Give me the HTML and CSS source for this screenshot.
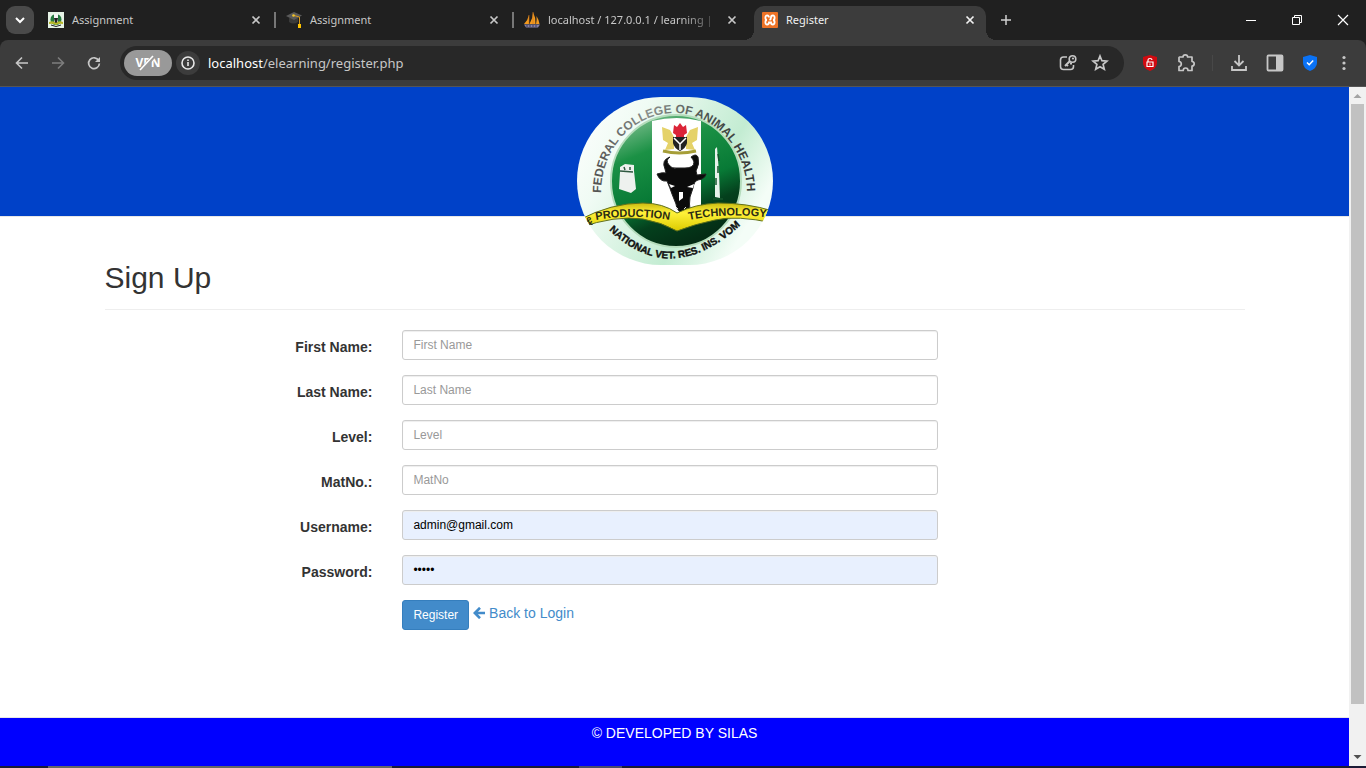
FILE: index.html
```html
<!DOCTYPE html>
<html lang="en">
<head>
<meta charset="utf-8">
<title>Register</title>
<link rel="stylesheet" href="styles.css">
</head>
<body>
<div class="window">
  <div class="tabstrip">
    <button class="tab-search" aria-label="Search tabs"><svg width="28" height="28" viewBox="0 0 28 28"><path d="M10 12l4 4 4-4" fill="none" stroke="#fff" stroke-width="2"/></svg></button>
    <div class="tab">
      <svg class="favicon" viewBox="0 0 16 16"><rect width="16" height="16" fill="#e6f3e6"/><circle cx="8" cy="7.500" r="5.500" fill="#247a3f"/><path d="M6 2h4v8H6z" fill="#f4f4f4"/><path d="M6 6l4 0-1 5H7z" fill="#222"/><path d="M1 10q4-2 7 1 3-3 7-1v2q-4-1-7 1-3-2-7-1z" fill="#b8b82a"/><path d="M3 13q5 3 10 0" stroke="#222" fill="none"/></svg>
      <span class="tab-title">Assignment</span>
      <button class="tab-close" aria-label="Close tab"><svg width="16" height="16" viewBox="0 0 16 16"><path d="M4.500 4.500l7 7m0-7l-7 7" stroke="currentColor" stroke-width="1.700"/></svg></button>
    </div>
    <i class="sep"></i>
    <div class="tab">
      <svg class="favicon" viewBox="0 0 16 16"><path d="M3 6v4q4 3 9 0V5z" fill="#3a3a3a"/><path d="M0 4l8-4 8 3.500L8 8z" fill="#5a5a5a"/><path d="M8 3.500l5.500 1.500v8" stroke="#d99a1c" fill="none"/><circle cx="7.500" cy="3.500" r="1.300" fill="#f3c62b"/><path d="M12 12h3v4h-3z" fill="#ffc400"/></svg>
      <span class="tab-title">Assignment</span>
      <button class="tab-close" aria-label="Close tab"><svg width="16" height="16" viewBox="0 0 16 16"><path d="M4.500 4.500l7 7m0-7l-7 7" stroke="currentColor" stroke-width="1.700"/></svg></button>
    </div>
    <i class="sep"></i>
    <div class="tab">
      <svg class="favicon" viewBox="0 0 16 16"><path d="M0 12Q4 8 5 3v9zM5.500 12Q9 6 9 0q3 6 2.500 12zM12 12q1-4 .500-8 2.500 4 3 8z" fill="#f39a1f"/><path d="M5 3v9M9 0v12" stroke="#c9731c" stroke-width=".6"/><path d="M0 12.500h16l-2 3H2z" fill="#8380a5"/><path d="M2 14h12" stroke="#3c3b55" stroke-dasharray="2 1"/></svg>
      <span class="tab-title fade">localhost / 127.0.0.1 / learning |</span>
      <button class="tab-close" aria-label="Close tab"><svg width="16" height="16" viewBox="0 0 16 16"><path d="M4.500 4.500l7 7m0-7l-7 7" stroke="currentColor" stroke-width="1.700"/></svg></button>
    </div>
    <i class="sep hidden"></i>
    <div class="tab active">
      <svg class="favicon" viewBox="0 0 16 16"><rect width="16" height="16" rx="1" fill="#ee7326"/><path d="M7 5.500Q7 3.500 5.200 3.500T3.400 5.700 5 8Q3.400 8 3.400 10.300T5.200 12.500 7 10.500L9 10.500Q9 12.500 10.800 12.500T12.600 10.300 11 8Q12.600 8 12.600 5.700T10.800 3.500 9 5.500 7.500 8" fill="none" stroke="#fff" stroke-width="1.800"/></svg>
      <span class="tab-title">Register</span>
      <button class="tab-close" aria-label="Close tab"><svg width="16" height="16" viewBox="0 0 16 16"><path d="M4.500 4.500l7 7m0-7l-7 7" stroke="currentColor" stroke-width="1.700"/></svg></button>
    </div>
    <button class="new-tab" aria-label="New tab"><svg width="16" height="16" viewBox="0 0 16 16"><path d="M8 3v10M3 8h10" stroke="#d0d0d0" stroke-width="1.500"/></svg></button>
    <div class="win-controls">
      <button aria-label="Minimize"><svg width="12" height="12" viewBox="0 0 12 12"><path d="M1 6.500h10" stroke="#fff"/></svg></button>
      <button aria-label="Restore"><svg width="12" height="12" viewBox="0 0 12 12"><path d="M1.500 3.500h7v7h-7zM3.500 3.500v-2h7v7h-2" fill="none" stroke="#fff"/></svg></button>
      <button aria-label="Close"><svg width="12" height="12" viewBox="0 0 12 12"><path d="M1 1l10 10M11 1L1 11" stroke="#fff" stroke-width="1.200"/></svg></button>
    </div>
  </div>
  <div class="toolbar">
    <button class="nav" aria-label="Back"><svg width="16" height="16" viewBox="0 0 16 16"><path d="M14 8H3M8 2.500L2.500 8 8 13.500" fill="none" stroke="#c7c7c7" stroke-width="1.600"/></svg></button>
    <button class="nav" aria-label="Forward"><svg width="16" height="16" viewBox="0 0 16 16"><path d="M2 8h11M8 2.500L13.500 8 8 13.500" fill="none" stroke="#7d7d7d" stroke-width="1.600"/></svg></button>
    <button class="nav" aria-label="Reload"><svg width="16" height="16" viewBox="0 0 16 16"><path d="M12.700 5.500A5.400 5.400 0 1 0 13.400 8.500" fill="none" stroke="#c7c7c7" stroke-width="1.700"/><path d="M14 2v5H9z" fill="#c7c7c7"/></svg></button>
    <div class="omnibox">
      <button class="vpn" aria-label="VPN off"><span>VPN</span><svg viewBox="0 0 48 26"><path d="M17 21L30 6" stroke="#999" stroke-width="4"/><path d="M16 20L29 6" stroke="#fff" stroke-width="1.600"/></svg></button>
      <button class="info" aria-label="Site information"><svg width="16" height="16" viewBox="0 0 16 16"><circle cx="8" cy="8" r="6" fill="none" stroke="#e8e8e8" stroke-width="1.600"/><path d="M8 7v4M8 4.500v1.500" stroke="#e8e8e8" stroke-width="1.600"/></svg></button>
      <span class="url"><b>localhost</b>/elearning/register.php</span>
      <button class="omni-icon" aria-label="Manage passwords"><svg width="20" height="20" viewBox="0 0 20 20"><path d="M9 4H5.500Q2.500 4 2.500 7V13.500Q2.500 16.500 5.500 16.500H12.500Q15.500 16.500 15.500 13.500V12" fill="none" stroke="#c7c7c7" stroke-width="1.600"/><path d="M7 13l5-5M8.500 11.500l1.500 1.500M12 10.500h2" stroke="#c7c7c7" stroke-width="2"/><circle cx="14.500" cy="6" r="3.300" fill="none" stroke="#c7c7c7" stroke-width="1.600"/><circle cx="15" cy="5.500" r="1.100" fill="#c7c7c7"/></svg></button>
      <button class="omni-icon" aria-label="Bookmark"><svg width="18" height="18" viewBox="0 0 18 18"><path d="M9 2l1.900 4.700 5 .4-3.800 3.300 1.200 4.900L9 12.700l-4.300 2.600 1.200-4.900L2.100 7.100l5-.4z" fill="none" stroke="#c7c7c7" stroke-width="1.700"/></svg></button>
    </div>
    <div class="extensions">
      <button aria-label="Unlock"><svg width="16" height="18" viewBox="0 0 16 18"><path d="M8 1l7 2v6q0 5-7 8-7-3-7-8V3z" fill="#d10a10"/><path d="M5 8h6v4.500H5zM6 8V6q0-1.500 2-1.500t2 1.500" fill="none" stroke="#fff" stroke-width="1.200"/><path d="M8 9.500v2" stroke="#fff"/></svg></button>
      <button aria-label="Extensions"><svg width="20" height="20" viewBox="0 0 20 20"><path d="M3.500 4H7Q7 1.800 9.300 1.800T11.600 4H16V8.500Q18.200 8.700 18.200 10.800T16 13.200V17.500H12Q12 15 9.600 15T7.200 17.500H3V13.500Q5.300 13.200 5.300 11T3 8.500V4.500z" fill="none" stroke="#c7c7c7" stroke-width="1.700" stroke-linejoin="round"/></svg></button>
      <i class="divider"></i>
      <button aria-label="Downloads"><svg width="18" height="18" viewBox="0 0 18 18"><path d="M9 1v10M4.500 7L9 11.500 13.500 7M2 12v4h14v-4" fill="none" stroke="#c7c7c7" stroke-width="1.800"/></svg></button>
      <button aria-label="Side panel"><svg width="18" height="18" viewBox="0 0 18 18"><rect x="1.500" y="1.500" width="15" height="15" rx="1" fill="none" stroke="#c7c7c7" stroke-width="1.800"/><path d="M10 1h7v16h-7z" fill="#c7c7c7"/></svg></button>
      <button class="narrow" aria-label="Protection"><svg width="16" height="18" viewBox="0 0 16 18"><path d="M8 1l7 2v6q0 5-7 8-7-3-7-8V3z" fill="#0a72f5"/><path d="M5 8.500l2.200 2.200L11.200 6.500" fill="none" stroke="#fff" stroke-width="1.500"/></svg></button>
      <button class="narrow" aria-label="Menu"><svg width="16" height="16" viewBox="0 0 16 16" fill="#c7c7c7"><circle cx="8" cy="2.500" r="1.600"/><circle cx="8" cy="8" r="1.600"/><circle cx="8" cy="13.500" r="1.600"/></svg></button>
    </div>
  </div>
  <div class="viewport">
    <div class="page">
      <header class="banner">
        <svg class="logo" viewBox="0 0 196 168" role="img" aria-label="Federal College of Animal Health and Production Technology">
          <defs>
            <linearGradient id="rim" x1="0" y1="0" x2="1" y2=".5"><stop offset="0" stop-color="#fff"/><stop offset=".3" stop-color="#f0fbf4"/><stop offset=".75" stop-color="#c3ecd2"/><stop offset="1" stop-color="#f4fdf7"/></linearGradient>
            <linearGradient id="disc" x1=".1" y1="0" x2=".5" y2="1"><stop offset="0" stop-color="#8cc59a"/><stop offset=".3" stop-color="#1b9145"/><stop offset=".62" stop-color="#087a36"/><stop offset=".8" stop-color="#04401d"/><stop offset="1" stop-color="#042d15"/></linearGradient>
            <linearGradient id="ribbon" x1="0" y1="0" x2="0" y2="1"><stop offset="0" stop-color="#c9ba10"/><stop offset=".35" stop-color="#fff13a"/><stop offset="1" stop-color="#dccb00"/></linearGradient>
            <linearGradient id="ink" x1="0" y1="0" x2="1" y2="0"><stop offset="0" stop-color="#4d4d4d"/><stop offset=".35" stop-color="#8a8f8c"/><stop offset=".7" stop-color="#4a504c"/><stop offset="1" stop-color="#333"/></linearGradient>
            <clipPath id="shape"><rect width="196" height="168" rx="84"/></clipPath>
            <path id="arc-top" d="M24 96A73 80 0 0 1 170 96"/>
            <path id="arc-bottom" d="M32 133Q96 194 168 124"/>
            <path id="arc-left" d="M19 123Q56 116 98 124"/>
            <path id="arc-right" d="M112 123Q150 115 196 121"/>
          </defs>
          <g clip-path="url(#shape)">
            <rect width="196" height="168" fill="url(#rim)"/>
            <ellipse cx="99" cy="84" rx="65" ry="66" fill="url(#disc)" stroke="#b5dcbc" stroke-width="2"/>
            <path d="M75 24Q100 18 124 24V120H75z" fill="#fff"/>
            <path d="M85 30l8 3 4 7v12l-9 1 3-7-5-3zM121 30l-8 3-4 7v12l9 1-3-7 5-3z" fill="#e5d269"/>
            <path d="M97 28l3 2 3-4 3 4 3-2 1 8-3 2v3h-8v-3l-3-2z" fill="#db2438"/>
            <path d="M96 40h14v6q-1 5-7 8-6-3-7-8z" fill="#222"/><path d="M97 41l6 6v6m0-6l6-6" stroke="#fff" fill="none" stroke-width="1.500"/>
            <path d="M86 54q16 4 33 0" stroke="#a69e38" stroke-width="3" fill="none"/>
            <path d="M93 60q-5 3-1 8 3 4 7 3h9q9 0 9-6-1-3-3-5 5-4 7 0 2 7-2 14l1 4 9-1q-1 5-8 6-4 1-5 8l-3 9q-1 8 0 12l-4 5q-4 1-7-3-3-3-3-7l-4-10q-2-6-5-13-7 1-10-7 6-2 9-1l-1-4q-4-9 5-12z" fill="#0b0b0b" stroke="#222"/>
            <path d="M92 87l6 2-4 2zM117 87l-7 3 6 1zM102 95h4v6l-4 3z" fill="#fff"/><path d="M99 110l2 2m8-2l-2 2" stroke="#ddd"/>
            <path d="M43 70l5-3 9 1v6l2 18-5 4-12-4 1-17z" fill="#eef1ee"/><path d="M43 74l13 1M47 70l1 3M53 70v3" stroke="#2f5840" stroke-width="1.500"/>
            <path d="M138 52l2-2 2 25 1 26-5-1z" fill="#e8f2eb"/><path d="M141 57l1 7m-1 5v7m-2 5v7M136 102h10" stroke="#14552c" stroke-width="1.500"/>
            <path d="M2 123Q34 106 66 106 86 106 100 116 118 107 141 106 170 106 196 114V126Q160 118 138 123 118 127 100 134 84 125 66 122 38 118 2 131z" fill="url(#ribbon)" stroke="#61701a"/>
            <g class="seal-text"><text class="rim-text"><textPath href="#arc-top">FEDERAL COLLEGE OF ANIMAL HEALTH</textPath></text>
            <text class="motto"><textPath href="#arc-bottom">NATIONAL VET. RES. INS. VOM</textPath></text>
            <text class="ribbon-text"><textPath href="#arc-left">PRODUCTION</textPath></text>
            <text class="ribbon-text"><textPath href="#arc-right">TECHNOLOGY</textPath></text>
            <text class="ribbon-text" x="8" y="128">&amp;</text></g>
          </g>
        </svg>
      </header>
      <main class="container">
        <h2>Sign Up</h2>
        <form>
          <div class="row"><label for="fname">First Name:</label><input id="fname" type="text" placeholder="First Name"></div>
          <div class="row"><label for="lname">Last Name:</label><input id="lname" type="text" placeholder="Last Name"></div>
          <div class="row"><label for="level">Level:</label><input id="level" type="text" placeholder="Level"></div>
          <div class="row"><label for="matno">MatNo.:</label><input id="matno" type="text" placeholder="MatNo"></div>
          <div class="row"><label for="user">Username:</label><input id="user" class="filled" type="text" value="admin@gmail.com"></div>
          <div class="row"><label for="pass">Password:</label><input id="pass" class="filled" type="password" value="admin"></div>
          <div class="row"><div class="actions"><button class="register" type="button">Register</button><a href="#"><svg width="12" height="12" viewBox="0 0 12 12"><path d="M12 6H2M7 .8L1.800 6 7 11.200" fill="none" stroke="currentColor" stroke-width="2.600"/></svg>Back to Login</a></div></div>
        </form>
      </main>
      <footer>© DEVELOPED BY SILAS</footer>
    </div>
    <div class="scrollbar"><svg width="17" height="17" viewBox="0 0 17 17"><path d="M4.500 11l4-4 4 4z" fill="#a3a3a3"/></svg><div class="thumb"></div><svg width="17" height="17" viewBox="0 0 17 17"><path d="M4.500 6l4 4 4-4z" fill="#505050"/></svg></div>
  </div>
  <div class="taskbar"><i class="task-search"></i><i class="task-item"></i></div>
</div>
</body>
</html>
```
FILE: styles.css
```css
* { box-sizing: border-box; }
body { margin: 0; font-family: "Liberation Sans", Arial, sans-serif; font-size: 14px; line-height: 20px; color: #333; }
button { border: 0; padding: 0; background: none; font: inherit; color: inherit; }
svg { display: block; flex: none; }
.window { display: flex; flex-direction: column; height: 100vh; overflow: hidden; background: #202020; }

.tabstrip { display: flex; align-items: flex-start; height: 40px; padding: 6px 0 0 6px; color: #c7c7c7; font: 11px/16px "Noto Sans", "Open Sans", sans-serif; }
.tab-search { width: 28px; height: 28px; margin-right: 6px; border-radius: 9px; background: #4a4a4a; }
.tab { display: flex; align-items: center; width: 232px; height: 28px; padding: 0 8px; }
.favicon { width: 16px; height: 16px; margin-right: 8px; }
.tab-title { flex: 1; min-width: 0; white-space: nowrap; }
.fade { -webkit-mask-image: linear-gradient(90deg, #000 75%, transparent); mask-image: linear-gradient(90deg, #000 75%, transparent); }
.sep { width: 2px; height: 16px; margin: 6px 2px; background: #777; }
.hidden { visibility: hidden; }
.active { position: relative; height: 34px; padding-bottom: 6px; border-radius: 10px 10px 0 0; background: #3c3c3c; color: #f1f1f1; }
.active::before, .active::after { content: ""; position: absolute; bottom: 0; width: 10px; height: 10px; }
.active::before { right: 100%; background: radial-gradient(circle at 0 0, #202020 10px, #3c3c3c 10px); }
.active::after { left: 100%; background: radial-gradient(circle at 100% 0, #202020 10px, #3c3c3c 10px); }
.new-tab { margin: 6px 12px; }
.win-controls { display: flex; margin-left: auto; }
.win-controls button { display: grid; place-items: center; width: 46px; height: 28px; }

.toolbar { display: flex; align-items: center; height: 47px; padding: 0 4px; border-bottom: 1px solid #555; border-radius: 8px 8px 0 0; background: #3c3c3c; }
.nav { display: grid; place-items: center; width: 36px; height: 34px; }
.omnibox { display: flex; align-items: center; flex: 1; height: 34px; margin-left: 8px; padding: 0 15px 0 4px; border-radius: 17px; background: #282828; }
.vpn { position: relative; width: 48px; height: 26px; margin-right: 4px; border-radius: 13px; background: #999; color: #fff; font: bold 12px/26px "Open Sans", sans-serif; }
.vpn svg { position: absolute; inset: 0; }
.info { display: grid; place-items: center; width: 24px; height: 24px; margin-right: 8px; border-radius: 12px; background: #3c3c3c; }
.url { flex: 1; color: #c7c7c7; font: 13px/20px "Noto Sans", "Open Sans", sans-serif; }
.url b { font-weight: 400; color: #fff; }
.omni-icon { margin-left: 13px; }
.extensions { display: flex; align-items: center; margin-right: 1px; }
.extensions button { display: grid; place-items: center; width: 36px; height: 34px; }
.extensions button:first-child { margin-left: 8px; }
.extensions .narrow { width: 34px; }
.divider { width: 1px; height: 16px; margin: 0 8px; background: #484848; }

.viewport { display: flex; flex: 1; min-height: 0; background: #fff; }
.page { display: flex; flex-direction: column; flex: 1; }
.banner { display: flex; justify-content: center; height: 130px; padding-top: 10px; border-bottom: 1px solid #e7e7e7; background: #0041c8; }
.logo { width: 196px; height: 168px; }
.seal-text { font-family: "Liberation Sans", Arial, sans-serif; font-weight: 700; }
.rim-text { font-size: 12px; fill: url(#ink); }
.motto { font-size: 10px; fill: #111; stroke: #111; stroke-width: 0.4; }
.ribbon-text { font-size: 11px; fill: #2b2b12; }

.container { flex: 1; width: 100%; max-width: 1170px; margin: 0 auto; padding: 44px 15px 0; }
h2 { margin: 0 0 20px; padding-bottom: 14px; border-bottom: 1px solid #eee; font-size: 30px; font-weight: 400; line-height: 34px; }
.row { display: grid; grid-template-columns: 23.5% 47%; justify-content: start; column-gap: 30px; margin-bottom: 15px; }
label { padding-top: 7px; text-align: right; font-weight: 700; }
input { width: 100%; height: 30px; padding: 5px 10px; border: 1px solid #ccc; border-radius: 3px; background: #fff; box-shadow: inset 0 1px 1px #eee; color: #000; font: 12px/18px "Liberation Sans", Arial, sans-serif; }
input::placeholder { color: #999; }
.filled { background: #e8f0fe; }
.actions { display: flex; grid-column: 2; gap: 4px; }
.register { height: 30px; padding: 0 10px; border: 1px solid #357ebd; border-radius: 3px; background: #428bca; color: #fff; font-size: 12px; }
.actions a { display: flex; align-items: center; gap: 4px; height: 26px; color: #428bca; text-decoration: none; }
footer { height: 49px; padding-top: 5px; border-top: 1px solid #e7e7e7; background: #00f; color: #fff; text-align: center; }

.scrollbar { display: flex; flex-direction: column; justify-content: space-between; width: 17px; background: #f1f1f1; }
.thumb { flex: 1; margin: 0 2px 45px; background: #c1c1c1; }
.taskbar { display: flex; height: 2px; padding-left: 48px; background: #1b1b35; }
.task-search { width: 344px; border: 1px solid #666; }
.task-item { width: 43px; margin-left: 187px; background: #4b4b6b; }
```
